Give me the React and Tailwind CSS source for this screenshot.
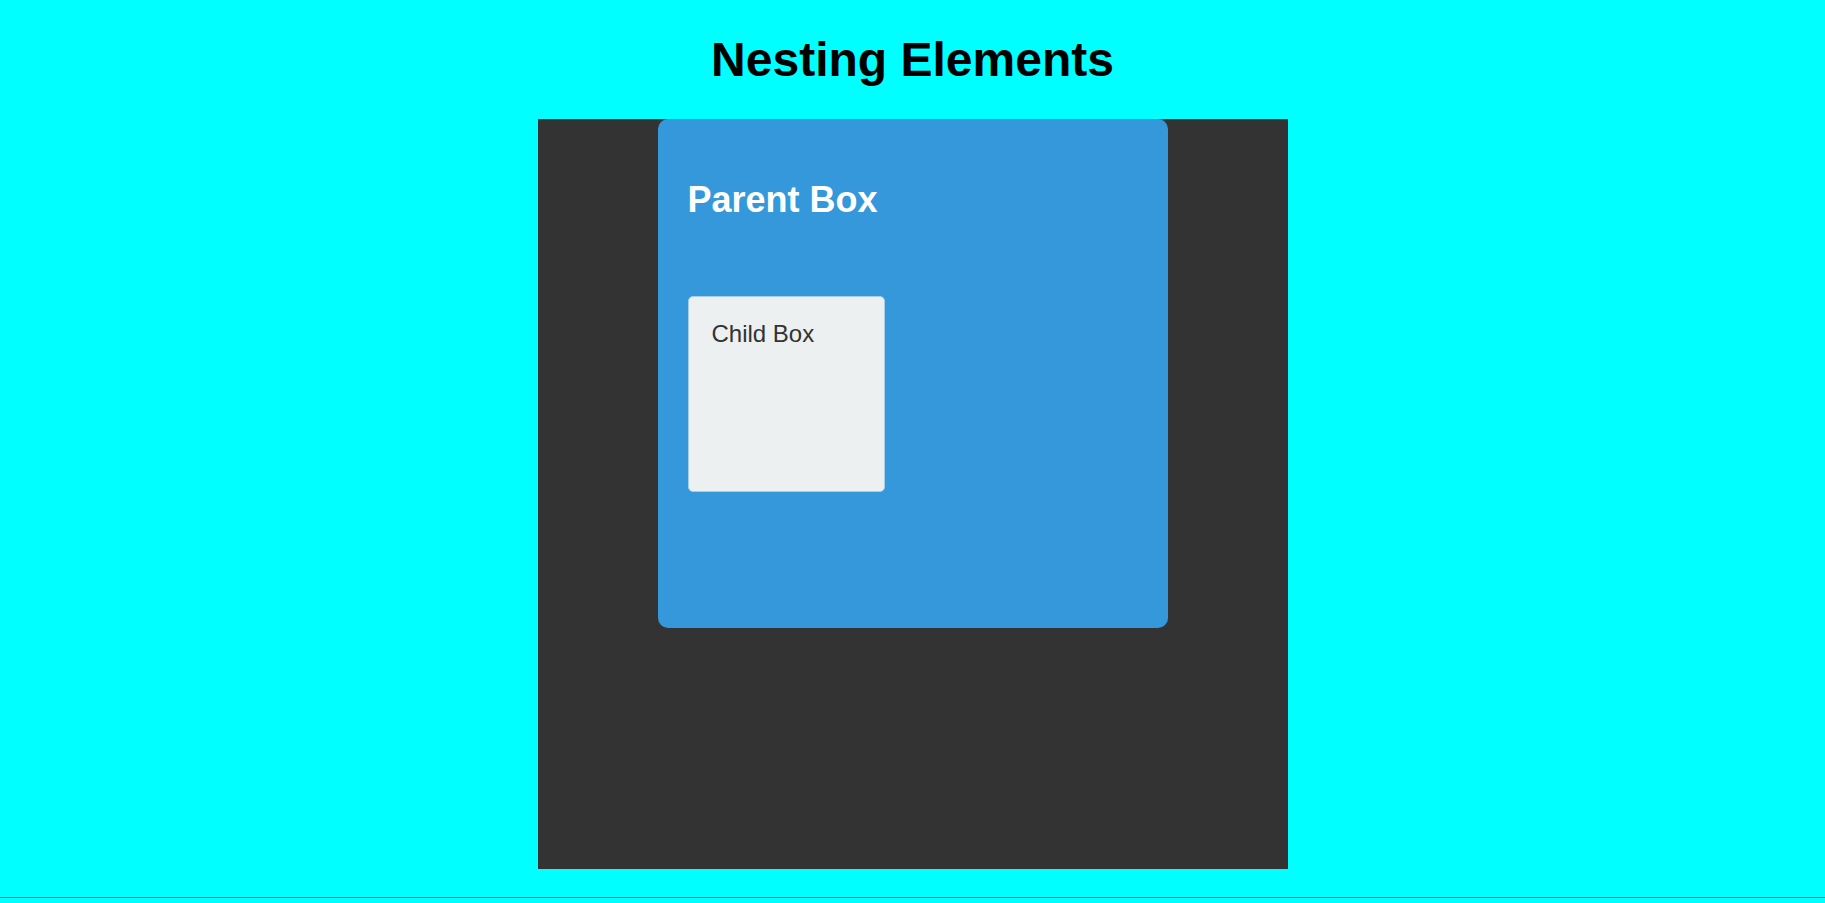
export default function App() {
  return (
    <div className="min-h-screen bg-[#00ffff] font-['Liberation_Sans',Arial,sans-serif] flex flex-col">
      {/* heading */}
      <h1 className="pt-[32px] text-center text-[48px] leading-[55px] font-bold text-black">
        Nesting Elements
      </h1>

      {/* outer dark container */}
      <div className="mt-[32px] mx-auto w-[750px] h-[750px] bg-[#333333]">
        <div className="mx-auto w-[510px] h-[509px] bg-[#3498db] rounded-[10px] px-[30px] pt-[60px]">
          <h2 className="text-[36px] leading-[41px] font-bold text-white">Parent Box</h2>

          <div className="mt-[76px] w-[197px] h-[196px] bg-[#ecf0f1] border border-[#a8cde6] rounded-[5px] p-[23px]">
            <p className="text-[24px] leading-[27px] text-[#333333]">Child Box</p>
          </div>
        </div>
      </div>

      <div className="mt-[28px] h-px w-full bg-[#1f7474]" />
    </div>
  );
}
